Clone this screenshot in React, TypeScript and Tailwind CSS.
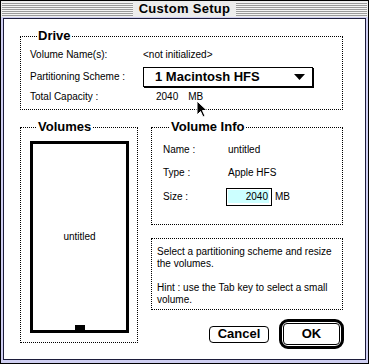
import type { ReactNode } from "react";

function GroupBox({
  title,
  className,
  children,
}: {
  title: string;
  className: string;
  children: ReactNode;
}) {
  return (
    <fieldset className={`border border-dotted border-black ${className}`}>
      <legend className="ml-[7px] px-[1px] text-[13px] leading-[14px] font-bold">
        {title}
      </legend>
      {children}
    </fieldset>
  );
}

function Stripes() {
  return (
    <div className="flex-1 h-[14px] bg-[repeating-linear-gradient(to_bottom,#f4f4f4_0px,#f4f4f4_1px,#9a9a9a_1px,#9a9a9a_2px)]" />
  );
}

export default function App() {
  return (
    <div className="w-[369px] h-[364px] border border-black bg-[#cfcff2] flex flex-col text-black text-[10px] leading-[14px] [font-family:'Liberation_Sans',Arial,sans-serif]">
      {/* title bar */}
      <div className="h-[16px] bg-[#ececec] flex items-center px-[1px]">
        <Stripes />
        <span className="px-[6px] text-[13px] leading-[14px] font-bold tracking-[0.3px]">
          Custom Setup
        </span>
        <Stripes />
      </div>

      <div className="relative flex-1 mx-[2px] mt-[1px] mb-[3px] bg-white border border-[#1c1c3a]">
        <GroupBox title="Drive" className="w-[323px] ml-[16px] mt-[10px] pl-[9px] pt-[5px] pb-[5px]">
          <div className="flex h-[14px] items-center">
            <span className="w-[113px]">Volume Name(s):</span>
            <span>&lt;not initialized&gt;</span>
          </div>
          <div className="flex h-[21px] items-center mt-[4px]">
            <span className="w-[113px]">Partitioning Scheme :</span>
            <div className="w-[170px] h-[20px] border border-black shadow-[1px_1px_0_#000] flex items-center justify-between pl-[11px] pr-[7px]">
              <span className="text-[13px] font-bold leading-[14px]">1 Macintosh HFS</span>
              <svg width="11" height="6" viewBox="0 0 11 6">
                <polygon points="0,0 11,0 5.5,6" fill="#000" />
              </svg>
            </div>
          </div>
          <div className="flex h-[14px] items-center mt-[3px]">
            <span className="w-[113px]">Total Capacity :</span>
            <span className="ml-[13px]">2040</span>
            <span className="ml-[10px]">MB</span>
          </div>
        </GroupBox>

        <div className="flex items-start ml-[16px] mt-[10px]">
          <GroupBox title="Volumes" className="w-[118px] pl-[9px] pt-[7px] pb-[9px]">
            <div className="w-[99px] h-[192px] border-[3px] border-black flex flex-col items-center">
              <div className="flex-1" />
              <span>untitled</span>
              <div className="flex-1 flex items-end">
                <div className="w-[10px] h-[5px] bg-black" />
              </div>
            </div>
          </GroupBox>

          <div className="ml-[13px] w-[192px] flex flex-col">
            <GroupBox title="Volume Info" className="w-[192px] pl-[11px] pt-[9px] pb-[18px]">
              <div className="flex h-[14px] items-center">
                <span className="w-[65px]">Name :</span>
                <span>untitled</span>
              </div>
              <div className="flex h-[14px] items-center mt-[9px]">
                <span className="w-[65px]">Type :</span>
                <span>Apple HFS</span>
              </div>
              <div className="flex h-[18px] items-center mt-[8px]">
                <span className="w-[63px]">Size :</span>
                <div className="w-[46px] h-[18px] border border-black pt-[1px] pl-[1px] pr-[2px] pb-[2px]">
                  <div className="h-full bg-[#ccffff] text-right pr-[1px] leading-[13px]">2040</div>
                </div>
                <span className="ml-[3px]">MB</span>
              </div>
            </GroupBox>

            <div className="mt-[13px] border border-dotted border-black pt-[7px] pl-[5px] pb-[3px] leading-[12px]">
              Select a partitioning scheme and resize
              <br />
              the volumes.
              <br />
              <br />
              Hint : use the Tab key to select a small
              <br />
              volume.
            </div>

            <div className="flex justify-end items-center mt-[9px] -mr-[1px]">
              <button className="w-[60px] h-[17px] mr-[10px] border border-black rounded-[4px] bg-white text-[13px] leading-[14px] font-bold flex items-center justify-center">
                Cancel
              </button>
              <div className="w-[65px] h-[30px] border-[3px] border-black rounded-[9px] p-[1px]">
                <button className="w-full h-full border border-black rounded-[4px] bg-white text-[13px] leading-[14px] font-bold flex items-center justify-center">
                  OK
                </button>
              </div>
            </div>
          </div>
        </div>

        {/* mouse pointer */}
        <svg
          className="absolute left-[192px] top-[81px]"
          width="12"
          height="18"
          viewBox="0 0 12 18"
        >
          <polygon
            points="1,1 1,15 4.5,11.5 7,17 9,16 6.5,10.5 11,10.5"
            fill="#000"
            stroke="#fff"
            strokeWidth="1"
          />
        </svg>
      </div>
    </div>
  );
}
